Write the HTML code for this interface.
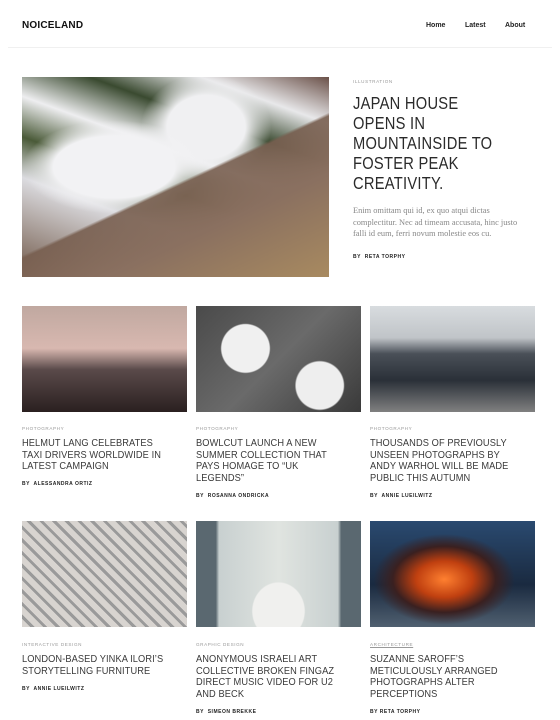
<!DOCTYPE html>
<html><head><meta charset="utf-8"><style>
*{margin:0;padding:0;box-sizing:border-box}
body{width:560px;height:720px;background:#fff;font-family:"Liberation Sans",sans-serif;position:relative;overflow:hidden;color:#222}
.a{position:absolute}
.logo{left:22px;top:20px;font-weight:bold;font-size:10px;letter-spacing:.2px;color:#111}
.nav{top:22px;font-size:7px;font-weight:bold;color:#222}
.hr{left:8px;top:47px;width:544px;height:1px;background:#f0f0f0}
.cat{font-size:4.6px;letter-spacing:.6px;color:#999;text-transform:uppercase}
.by{font-size:5px;font-weight:bold;letter-spacing:.5px;color:#222}
.t{font-size:10.3px;line-height:11.6px;color:#3a3a3a;letter-spacing:.1px;white-space:nowrap;transform:scaleX(.9);transform-origin:0 0}
.img{width:165px;height:106px}
</style></head><body>
<div class="a logo">NOICELAND</div>
<div class="a nav" style="left:426px">Home</div>
<div class="a nav" style="left:465px">Latest</div>
<div class="a nav" style="left:505px">About</div>
<div class="a hr"></div>

<div class="a" style="left:22px;top:77px;width:307px;height:200px;background:
linear-gradient(155deg,transparent 52%,rgba(120,95,80,.9) 53%,#8a7060 70%,#a88a60 100%),
radial-gradient(ellipse at 30% 45%,#f2f2f4 20%,transparent 30%),
radial-gradient(ellipse at 60% 25%,#f0f0f2 15%,transparent 25%),
linear-gradient(200deg,#6a5048 0%,#e8e8ea 15%,#3a4a30 28%,#eeeef0 42%,#4a5a38 55%,#dcdce0 68%,#705848 100%)"></div>
<div class="a cat" style="left:353px;top:79px">Illustration</div>
<div class="a" style="left:353px;top:93px;font-size:17.5px;line-height:20px;letter-spacing:.3px;color:#2a2a2a;white-space:nowrap;transform:scaleX(.84);transform-origin:0 0">JAPAN HOUSE<br>OPENS IN<br>MOUNTAINSIDE TO<br>FOSTER PEAK<br>CREATIVITY.</div>
<div class="a" style="left:353px;top:205px;font-family:'Liberation Serif',serif;font-size:8.4px;line-height:11.7px;color:#888;white-space:nowrap">Enim omittam qui id, ex quo atqui dictas<br>complectitur. Nec ad timeam accusata, hinc justo<br>falli id eum, ferri novum molestie eos cu.</div>
<div class="a by" style="left:353px;top:254px">BY&nbsp; RETA TORPHY</div>

<div class="a img" style="left:22px;top:306px;background:linear-gradient(180deg,#c0a8a0 0%,#d8b8b0 40%,#5a4a4a 60%,#2a2020 100%)"></div>
<div class="a img" style="left:196px;top:306px;background:radial-gradient(circle at 30% 40%,#f0f0f0 18%,transparent 19%),radial-gradient(circle at 75% 75%,#eee 16%,transparent 17%),linear-gradient(135deg,#4a4a4a,#6a6a6a 50%,#3a3a3a)"></div>
<div class="a img" style="left:370px;top:306px;background:linear-gradient(180deg,#d8dcdf 0%,#c0c4c8 30%,#4a5058 45%,#2a3038 70%,#808080 100%)"></div>

<div class="a cat" style="left:22px;top:426px">Photography</div>
<div class="a cat" style="left:196px;top:426px">Photography</div>
<div class="a cat" style="left:370px;top:426px">Photography</div>
<div class="a t" style="left:22px;top:438px">HELMUT LANG CELEBRATES<br>TAXI DRIVERS WORLDWIDE IN<br>LATEST CAMPAIGN</div>
<div class="a t" style="left:196px;top:438px">BOWLCUT LAUNCH A NEW<br>SUMMER COLLECTION THAT<br>PAYS HOMAGE TO “UK<br>LEGENDS”</div>
<div class="a t" style="left:370px;top:438px">THOUSANDS OF PREVIOUSLY<br>UNSEEN PHOTOGRAPHS BY<br>ANDY WARHOL WILL BE MADE<br>PUBLIC THIS AUTUMN</div>
<div class="a by" style="left:22px;top:481px">BY&nbsp; ALESSANDRA ORTIZ</div>
<div class="a by" style="left:196px;top:493px">BY&nbsp; ROSANNA ONDRICKA</div>
<div class="a by" style="left:370px;top:493px">BY&nbsp; ANNIE LUEILWITZ</div>

<div class="a img" style="left:22px;top:521px;background:repeating-linear-gradient(45deg,#d8d4d0 0 6px,#9a9a9a 6px 9px),#ccc"></div>
<div class="a img" style="left:196px;top:521px;background:radial-gradient(ellipse at 50% 85%,#f0f0ee 22%,transparent 23%),linear-gradient(90deg,#5a6870 0 12%,#c8d0d0 14%,#e0e4e0 50%,#c8d0d0 86%,#5a6870 88%)"></div>
<div class="a img" style="left:370px;top:521px;background:radial-gradient(ellipse at 45% 55%,#ff8030 0%,#c04010 22%,#3a2020 40%,transparent 55%),linear-gradient(180deg,#2a4a70,#1a2a40 60%,#506070)"></div>

<div class="a cat" style="left:22px;top:642px">Interactive Design</div>
<div class="a cat" style="left:196px;top:642px">Graphic Design</div>
<div class="a cat" style="left:370px;top:642px;text-decoration:underline">Architecture</div>
<div class="a t" style="left:22px;top:654px">LONDON-BASED YINKA ILORI’S<br>STORYTELLING FURNITURE</div>
<div class="a t" style="left:196px;top:654px">ANONYMOUS ISRAELI ART<br>COLLECTIVE BROKEN FINGAZ<br>DIRECT MUSIC VIDEO FOR U2<br>AND BECK</div>
<div class="a t" style="left:370px;top:654px">SUZANNE SAROFF’S<br>METICULOUSLY ARRANGED<br>PHOTOGRAPHS ALTER<br>PERCEPTIONS</div>
<div class="a by" style="left:22px;top:686px">BY&nbsp; ANNIE LUEILWITZ</div>
<div class="a by" style="left:196px;top:709px">BY&nbsp; SIMEON BREKKE</div>
<div class="a by" style="left:370px;top:709px">BY RETA TORPHY</div>
</body></html>
